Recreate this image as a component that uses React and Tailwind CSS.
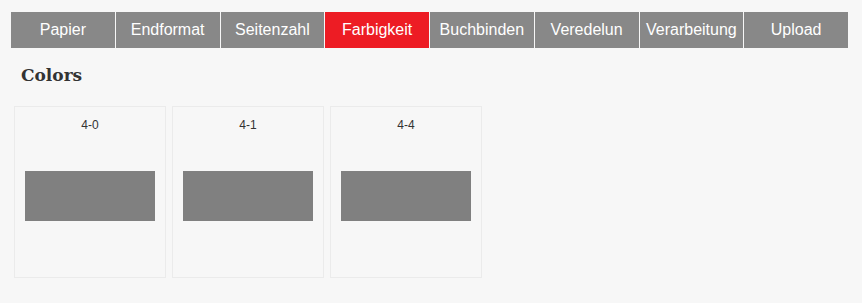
import React from 'react';

const tabs = ['Papier', 'Endformat', 'Seitenzahl', 'Farbigkeit', 'Buchbinden', 'Veredelun', 'Verarbeitung', 'Upload'];
const colors = ['4-0', '4-1', '4-4'];

const ColorCard = ({ label }) => (
  <div className="w-[152px] h-[172px] border border-[#ebebeb] px-[10px] pt-[10px]">
    <p className="text-center text-[12px] leading-[16px] text-[#333]">{label}</p>
    <div className="mt-[38px] h-[50px] bg-[#808080]" />
  </div>
);

const App = () => {
  return (
    <div className="w-[862px] h-[303px] bg-[#f7f7f7] pt-[12px] font-['Liberation_Sans',Arial,sans-serif]">
      <div className="mx-[11px] w-[837px] grid grid-cols-8 gap-px">
        {tabs.map((t) => (
          <div
            key={t}
            className={`h-[36px] flex items-center justify-center text-white text-[16px] ${t === 'Farbigkeit' ? 'bg-[#ed1c24]' : 'bg-[#888888]'}`}
          >
            {t}
          </div>
        ))}
      </div>
      <h2 className="ml-[21px] mt-[16px] text-[17px] leading-[22px] font-bold text-[#333] font-['DejaVu_Serif',serif]">
        Colors
      </h2>
      <div className="ml-[14px] mt-[20px] flex gap-[6px]">
        {colors.map((c) => (
          <ColorCard key={c} label={c} />
        ))}
      </div>
    </div>
  );
};

export default App;
